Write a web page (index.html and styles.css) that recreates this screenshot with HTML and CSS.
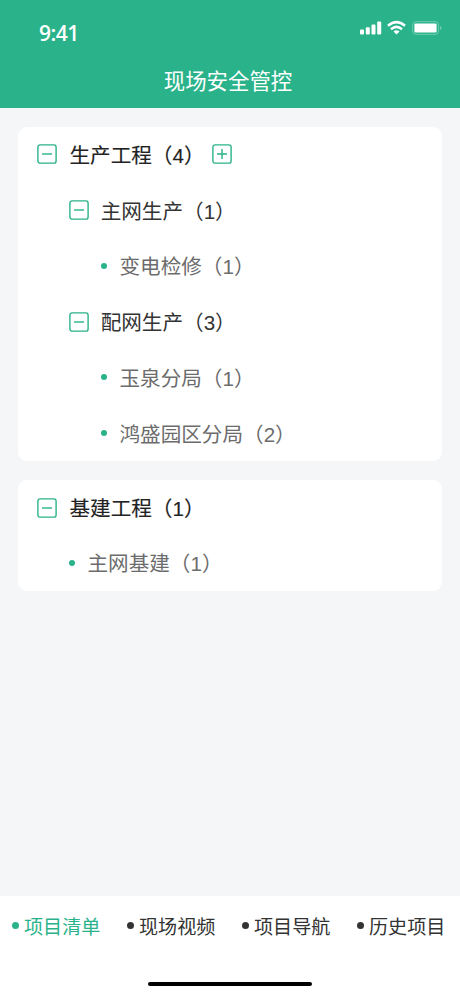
FILE: index.html
```html
<!DOCTYPE html>
<html lang="zh-CN">
<head>
<meta charset="utf-8">
<title>现场安全管控</title>
<link rel="stylesheet" href="styles.css">
</head>
<body>
<svg class="defs" width="0" height="0">
  <symbol id="minus" viewBox="0 0 20 20"><rect x=".9" y=".9" width="18.2" height="18.2" rx="2.2"/><path d="M5 10h10"/></symbol>
  <symbol id="plus" viewBox="0 0 20 20"><rect x=".9" y=".9" width="18.2" height="18.2" rx="2.2"/><path d="M5 10h10M10 5v10"/></symbol>
</svg>
<header class="header">
  <div class="status">
    <span class="time">9:41</span>
    <svg class="signals" width="84" height="18" viewBox="0 0 84 18" fill="#fff">
      <rect x="0" y="9.5" width="4" height="5" rx="1"/>
      <rect x="5.8" y="7.2" width="4" height="7.3" rx="1"/>
      <rect x="11.5" y="4.5" width="4" height="10" rx="1"/>
      <rect x="17.2" y="1.5" width="4" height="13" rx="1"/>
      <g fill="none" stroke="#fff" stroke-width="2.5"><path d="M28 5.7q8.5-7.2 17 0"/><path d="M31 9.2q5.5-4.7 11 0"/></g>
      <path d="M33.5 11.5q3-2.4 6 0l-3 3.1z"/>
      <rect x="52.6" y="1.6" width="26" height="12.8" rx="3.4" fill="none" stroke="#fff" stroke-opacity=".3" stroke-width="1"/>
      <rect x="54.4" y="3.4" width="22.2" height="9.2" rx="1.3"/>
      <path d="M80 6q1.5.7 1.5 2t-1.5 2z" opacity=".35"/>
    </svg>
  </div>
  <h1 class="title">现场安全管控</h1>
</header>
<main class="content">
  <section class="card">
    <div class="row top"><svg class="toggle"><use href="#minus"/></svg><span>生产工程（4）</span><svg class="toggle add"><use href="#plus"/></svg></div>
    <div class="row second"><svg class="toggle"><use href="#minus"/></svg><span>主网生产（1）</span></div>
    <div class="row leaf deep"><i class="dot"></i><span>变电检修（1）</span></div>
    <div class="row second"><svg class="toggle"><use href="#minus"/></svg><span>配网生产（3）</span></div>
    <div class="row leaf deep"><i class="dot"></i><span>玉泉分局（1）</span></div>
    <div class="row leaf deep"><i class="dot"></i><span>鸿盛园区分局（2）</span></div>
  </section>
  <section class="card short">
    <div class="row top"><svg class="toggle"><use href="#minus"/></svg><span>基建工程（1）</span></div>
    <div class="row leaf"><i class="dot"></i><span>主网基建（1）</span></div>
  </section>
</main>
<footer class="footer">
  <nav class="tabs">
    <a class="tab active"><i class="dot"></i>项目清单</a>
    <a class="tab"><i class="dot"></i>现场视频</a>
    <a class="tab"><i class="dot"></i>项目导航</a>
    <a class="tab"><i class="dot"></i>历史项目</a>
  </nav>
  <div class="home"></div>
</footer>
</body>
</html>
```
FILE: styles.css
```css
* { box-sizing: border-box; }
body {
  margin: 0;
  height: 996px;
  display: flex;
  flex-direction: column;
  background: #f4f6f8;
  color: #333;
  font-family: "Liberation Sans", "Noto Sans CJK SC", sans-serif;
}
.defs { position: absolute; }
.header { height: 108px; background: #2ab38a; color: #fff; }
.status {
  height: 54px;
  padding: 20px 16px 0 39px;
  display: flex;
  justify-content: space-between;
  align-items: flex-start;
}
.time { font: 600 21px/27px "Open Sans", sans-serif; letter-spacing: -.5px; }
.signals { display: block; }
.title { margin: 0; padding-right: 4px; font-size: 21.4px; line-height: 57px; font-weight: 400; text-align: center; }
.content { flex: 1; padding: 18.5px 18px 0; }
.card { background: #fff; border-radius: 9px; margin-bottom: 19px; }
.row { height: 55.75px; display: flex; align-items: center; padding-left: 19px; font-size: 20.6px; line-height: 30px; white-space: nowrap; }
.row span { padding-top: 3px; }
.short .row { height: 55.25px; }
.top { color: #222; -webkit-text-stroke: .15px #222; }
.second { padding-left: 51px; }
.leaf { padding-left: 51px; color: #6c6c6c; }
.deep { padding-left: 83px; }
.toggle { width: 20px; height: 20px; margin-right: 12.5px; flex: none; fill: none; stroke: #2ab38a; stroke-width: 1.4; }
.second .toggle { margin-right: 11.7px; }
.add { margin: 0 0 0 7px; }
.dot { width: 6px; height: 6px; border-radius: 50%; background: #2ab38a; flex: none; }
.leaf .dot { margin-right: 12.5px; }
.footer {
  height: 100px;
  background: #fff;
  display: flex;
  flex-direction: column;
  justify-content: space-between;
  align-items: center;
  padding-bottom: 10.5px;
}
.tabs { display: flex; width: 100%; height: 59px; padding-left: 12px; }
.tab { width: 115px; flex: none; display: flex; align-items: center; gap: 5px; font-size: 19.1px; white-space: nowrap; }
.tab:last-child { width: auto; }
.tab .dot { width: 7px; height: 7px; background: #333; }
.tab.active { color: #2ab38a; }
.tab.active .dot { background: #2ab38a; }
.home { width: 164px; height: 4px; border-radius: 2px; background: #000; }
```
